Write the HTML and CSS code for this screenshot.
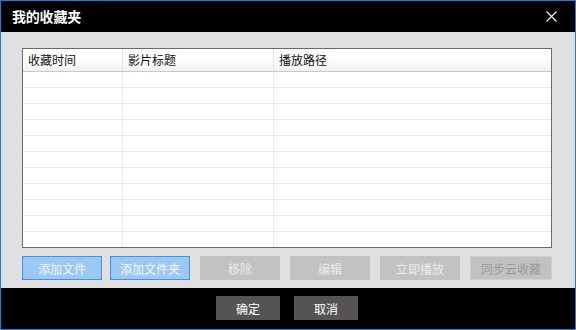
FILE: index.html
```html
<!DOCTYPE html>
<html lang="zh-CN">
<head>
    <meta charset="UTF-8">
    <title>我的收藏夹</title>
    <link rel="stylesheet" href="styles.css">
</head>
<body>
    <div class="window">
        <div class="titlebar">
            <span class="title">我的收藏夹</span>
            <svg class="close" width="11" height="11" viewBox="0 0 11 11">
                <path d="M0.5 0.5 L10.5 10.5 M10.5 0.5 L0.5 10.5" stroke="#fff" stroke-width="1.1" fill="none"/>
            </svg>
        </div>

        <div class="content">
            <div class="table">
                <div class="row head">
                    <div class="cell">收藏时间</div>
                    <div class="cell">影片标题</div>
                    <div class="cell">播放路径</div>
                </div>
                <div class="row"><div class="cell"></div><div class="cell"></div><div class="cell"></div></div>
                <div class="row"><div class="cell"></div><div class="cell"></div><div class="cell"></div></div>
                <div class="row"><div class="cell"></div><div class="cell"></div><div class="cell"></div></div>
                <div class="row"><div class="cell"></div><div class="cell"></div><div class="cell"></div></div>
                <div class="row"><div class="cell"></div><div class="cell"></div><div class="cell"></div></div>
                <div class="row"><div class="cell"></div><div class="cell"></div><div class="cell"></div></div>
                <div class="row"><div class="cell"></div><div class="cell"></div><div class="cell"></div></div>
                <div class="row"><div class="cell"></div><div class="cell"></div><div class="cell"></div></div>
                <div class="row"><div class="cell"></div><div class="cell"></div><div class="cell"></div></div>
                <div class="row"><div class="cell"></div><div class="cell"></div><div class="cell"></div></div>
                <div class="row last"><div class="cell"></div><div class="cell"></div><div class="cell"></div></div>
            </div>

            <div class="actions">
                <button class="btn active first">添加文件</button>
                <button class="btn active">添加文件夹</button>
                <button class="btn">移除</button>
                <button class="btn">编辑</button>
                <button class="btn">立即播放</button>
                <button class="btn muted">同步云收藏</button>
            </div>
        </div>

        <div class="footer">
            <button class="dlg-btn">确定</button>
            <button class="dlg-btn">取消</button>
        </div>
    </div>
</body>
</html>
```

FILE: styles.css
```css
* {
    box-sizing: border-box;
}
body {
    margin: 0;
    background: #000;
    font-family: "Noto Sans CJK SC", "Microsoft YaHei", sans-serif;
    font-size: 12px;
}
.window {
    width: 576px;
    height: 330px;
    border: 1px solid #1a7fe0;
    display: flex;
    flex-direction: column;
    background: #000;
}
.titlebar {
    height: 31px;
    display: flex;
    align-items: center;
    justify-content: space-between;
    padding: 0 18px 1px 11px;
}
.title {
    color: #fff;
    font-size: 14px;
    font-weight: bold;
    letter-spacing: -0.2px;
}
.close {
    display: block;
    margin-top: 1px;
}
.content {
    height: 256px;
    background: #e0e0e0;
    padding: 16px 23px 8px 21px;
}
.table {
    height: 200px;
    border: 1px solid #6a6a6a;
    background: #fff;
    overflow: hidden;
}
.row {
    display: grid;
    grid-template-columns: 100px 151px 1fr;
    height: 16px;
    border-bottom: 1px solid #ececec;
}
.row .cell {
    border-right: 1px solid #ececec;
}
.row .cell:last-child {
    border-right: none;
}
.row.head {
    height: 23px;
    border-bottom: 1px solid #c9c9c9;
    background: linear-gradient(#ffffff, #ffffff 45%, #f0f0f0);
}
.row.head .cell {
    border-right: 1px solid #e4e4e4;
    color: #111;
    line-height: 21px;
    padding-left: 5px;
}
.row.head .cell:last-child {
    border-right: none;
}
.row.last {
    height: 20px;
    border-bottom: none;
}
.actions {
    display: flex;
    gap: 10px;
    margin-top: 8px;
}
.btn {
    width: 80px;
    height: 24px;
    border: 1px solid #c2c2c2;
    background: #c2c2c2;
    color: #ececec;
    font-family: inherit;
    font-size: 12px;
    padding: 0;
}
.btn.first {
    margin-right: -2px;
}
.btn.active {
    background: #9dc8f4;
    border-color: #3a93f5;
    color: #f2f7fd;
}
.btn.muted {
    width: 82px;
    border-color: #cfcfcf;
    color: #999;
}
.footer {
    flex: 1;
    display: flex;
    justify-content: center;
    gap: 14px;
    padding-top: 8px;
    padding-right: 2px;
}
.dlg-btn {
    width: 64px;
    height: 24px;
    border: none;
    background: #545454;
    color: #fff;
    font-family: inherit;
    font-size: 12px;
    padding: 0;
}
```
